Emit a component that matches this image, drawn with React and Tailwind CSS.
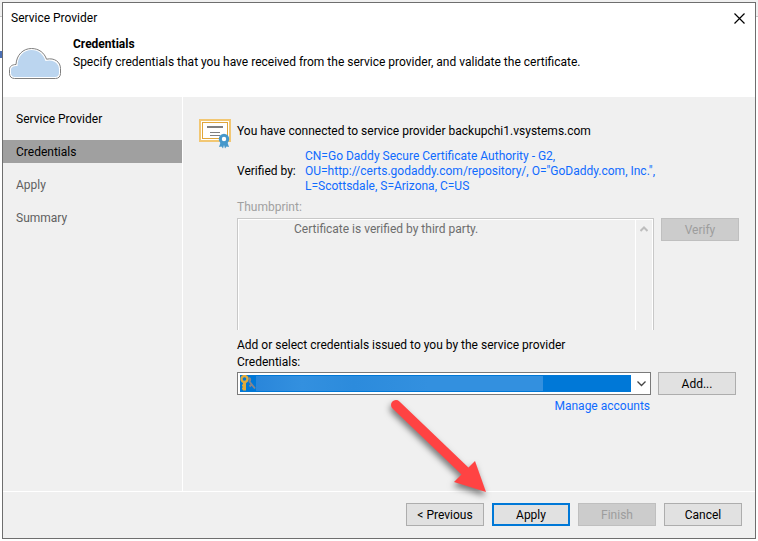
const steps = [
  { label: 'Service Provider', state: 'done' },
  { label: 'Credentials', state: 'current' },
  { label: 'Apply', state: 'pending' },
  { label: 'Summary', state: 'pending' },
];

const stepStyles = {
  done: 'text-black',
  current: 'bg-[#a0a0a0] text-black',
  pending: 'text-[#5f5f5f]',
};

function Button({ children, primary, disabled }) {
  let look = 'border border-[#adadad] bg-[#e1e1e1] text-black';
  if (primary) look = 'border-2 border-[#0078d7] bg-[#e1e1e1] text-black';
  if (disabled) look = 'border border-[#bfbfbf] bg-[#cccccc] text-[#9d9d9d]';
  return (
    <button type="button" disabled={disabled} className={`h-[23px] w-[78px] shrink-0 pt-[2px] ${look}`}>
      {children}
    </button>
  );
}

function CloudIcon() {
  return (
    <svg className="mt-[15px] shrink-0" width="52" height="32" viewBox="0 0 52 32" aria-hidden="true">
      <path
        d="M5.500 30.500C2.500 30.500 0.500 28.500 0.500 25.500V21.500C0.500 18.500 3 16.500 7 16.500C7.500 7 14 0.500 22.500 0.500C30 0.500 35.500 5 37.500 11.200C45.500 9.500 51.500 14 51.500 20.500V25.500C51.500 28.500 49.500 30.500 46.500 30.500Z"
        fill="#fff"
        stroke="#808080"
      />
      <path
        d="M6 29C3.500 29 2 27.500 2 25V22C2 19.500 4 18 8.500 18C8.500 8.500 14.500 2 22.500 2C29.500 2 34.500 6.500 36.500 13C44 11 50 15 50 21V25C50 27.500 48.500 29 46 29Z"
        fill="#bbd5ef"
      />
    </svg>
  );
}

function CertificateIcon() {
  return (
    <svg className="-mt-px shrink-0" width="32" height="30" viewBox="0 0 32 30" aria-hidden="true">
      <rect x="1" y="1" width="30" height="21" fill="#fff" stroke="#f2c773" strokeWidth="2" />
      <rect x="3.500" y="3.500" width="25" height="16" fill="#fff" stroke="#e0a63a" />
      <path d="M8 8H24" stroke="#808080" strokeWidth="2" />
      <path d="M11 13.500H21M11 16.500H21" stroke="#808080" />
      <path d="M22 22L20 28L22.500 27.500L24 29.500L25 26L26 29.500L27.500 27.500L30 28L28 22Z" fill="#4698cb" />
      <circle cx="25" cy="20" r="3.700" fill="#fff" stroke="#4698cb" strokeWidth="3" />
    </svg>
  );
}

function KeysIcon() {
  return (
    <svg className="shrink-0" width="16" height="17" viewBox="0 0 16 17" fill="none" aria-hidden="true">
      <path d="M9 3C11 3.500 10 6 9.500 6.500M9 6L15 13.500M11 10L9.500 11.500" stroke="#85858d" strokeWidth="2" />
      <circle cx="4.500" cy="4" r="3" stroke="#e0ab3c" strokeWidth="2.400" />
      <path d="M4.500 7V15.500" stroke="#e0ab3c" strokeWidth="3" />
      <path d="M4.500 10.500H2M4.500 13.500H2" stroke="#e0ab3c" strokeWidth="2" />
    </svg>
  );
}

function Arrow() {
  return (
    <svg
      className="pointer-events-none absolute right-[250px] bottom-[30px] drop-shadow-[-1px_4px_3px_rgba(0,0,0,0.5)]"
      width="120"
      height="112"
      viewBox="385 396 120 112"
      aria-hidden="true"
    >
      <path d="M396 405L466 472" stroke="#ff4343" strokeWidth="10" strokeLinecap="round" />
      <path d="M475 461L486 492L454 482Z" fill="#ff4343" />
    </svg>
  );
}

function Header() {
  return (
    <header className="bg-white">
      <div className="flex h-[30px] items-center justify-between pr-[10px] pl-2">
        <h1>Service Provider</h1>
        <button type="button" aria-label="Close">
          <svg width="11" height="11" viewBox="0 0 11 11">
            <path d="M0.500 0.500L10.500 10.500M10.500 0.500L0.500 10.500" stroke="#000" strokeWidth="1.200" />
          </svg>
        </button>
      </div>
      <div className="flex h-16 gap-3 pl-[6px]">
        <CloudIcon />
        <div className="flex flex-col gap-[3px] pt-1">
          <h2 className="font-bold">Credentials</h2>
          <p>Specify credentials that you have received from the service provider, and validate the certificate.</p>
        </div>
      </div>
    </header>
  );
}

function Sidebar() {
  return (
    <nav className="w-[180px] shrink-0 border-r border-white pt-[10px]">
      <ol className="flex flex-col gap-[10px]">
        {steps.map((step) => (
          <li key={step.label} className={`flex h-[23px] items-center pt-[2px] pl-[13px] ${stepStyles[step.state]}`}>
            {step.label}
          </li>
        ))}
      </ol>
    </nav>
  );
}

function CredentialsForm() {
  return (
    <main className="flex min-w-0 flex-1 gap-[6px] pt-[23px] pr-4 pl-4">
      <CertificateIcon />
      <div className="min-w-0 flex-1 pt-1">
        <p>You have connected to service provider backupchi1.vsystems.com</p>
        <div className="mt-[10px] flex items-center">
          <span className="w-[68px] shrink-0">Verified by:</span>
          <p className="whitespace-nowrap text-[#0f6bff]">
            CN=Go Daddy Secure Certificate Authority - G2,
            <br />
            OU=http://certs.godaddy.com/repository/, O="GoDaddy.com, Inc.",
            <br />
            L=Scottsdale, S=Arizona, C=US
          </p>
        </div>

        <label htmlFor="thumbprint" className="mt-[6px] block text-[#a0a0a0]">
          Thumbprint:
        </label>
        <div className="mt-[3px] flex items-start gap-[7px]">
          <div className="flex h-28 min-w-0 flex-1 border-x border-t border-[#c8c8c8]">
            <textarea
              id="thumbprint"
              readOnly
              disabled
              className="min-w-0 flex-1 resize-none overflow-hidden border-t border-l border-white pt-[2px] pl-[55px] text-[#6d6d6d]"
              defaultValue="Certificate is verified by third party."
            />
            <div className="flex w-[18px] justify-center border-x border-t border-white pt-[6px]">
              <svg width="8" height="6" viewBox="0 0 8 6" fill="none" aria-hidden="true">
                <path d="M0.500 5L4 1.500L7.500 5" stroke="#bdbdbd" strokeWidth="2" />
              </svg>
            </div>
          </div>
          <Button disabled>Verify</Button>
        </div>

        <p className="mt-2">Add or select credentials issued to you by the service provider</p>
        <label htmlFor="credentials" className="mt-[2px] block">
          Credentials:
        </label>
        <div className="mt-[2px] mr-[3px] flex gap-[7px]">
          <div className="relative h-[23px] min-w-0 flex-1">
            <select id="credentials" className="h-full w-full appearance-none border border-[#7a7a7a] bg-white">
              <option value=""></option>
            </select>
            <div className="pointer-events-none absolute inset-[3px] flex items-center">
              <div className="flex h-full flex-1 items-center bg-[#0078d7]">
                <KeysIcon />
                <div className="h-[15px] w-[287px] bg-[linear-gradient(90deg,#2a86da,#3390df_16%,#2c8bdc_34%,#3390df_60%,#3390df)]" />
              </div>
              <svg className="mr-[2px] ml-[6px]" width="9" height="6" viewBox="0 0 9 6" fill="none" aria-hidden="true">
                <path d="M0.500 0.500L4.500 4.500L8.500 0.500" stroke="#444" strokeWidth="1.300" />
              </svg>
            </div>
          </div>
          <Button>Add...</Button>
        </div>
        <div className="mt-1 mr-[89px] text-right">
          <a href="#accounts" className="text-[#0f6bff]">
            Manage accounts
          </a>
        </div>
      </div>
    </main>
  );
}

export default function App() {
  return (
    <div className="relative flex min-h-screen bg-[linear-gradient(#f0f0f0_16px,#c8c8c8_16px,#c8c8c8_17px,#ffffff_17px)] p-[2px] font-[Roboto,'Open_Sans',sans-serif] text-[12px] leading-[15px] text-black">
      {/* edge of the window behind the dialog */}
      <div className="absolute top-[51px] left-0 h-[7px] w-[2px] bg-[#4a6fb5]" />
      <div className="relative flex min-w-0 flex-1 flex-col border border-[#6e6e6e] bg-[#f0f0f0]">
        <Header />
        <div className="flex flex-1">
          <Sidebar />
          <CredentialsForm />
        </div>
        <footer className="flex justify-end gap-2 border-t border-white px-[13px] pt-[11px] pb-3">
          <Button>&lt; Previous</Button>
          <Button primary>Apply</Button>
          <Button disabled>Finish</Button>
          <Button>Cancel</Button>
        </footer>
        <Arrow />
      </div>
    </div>
  );
}
